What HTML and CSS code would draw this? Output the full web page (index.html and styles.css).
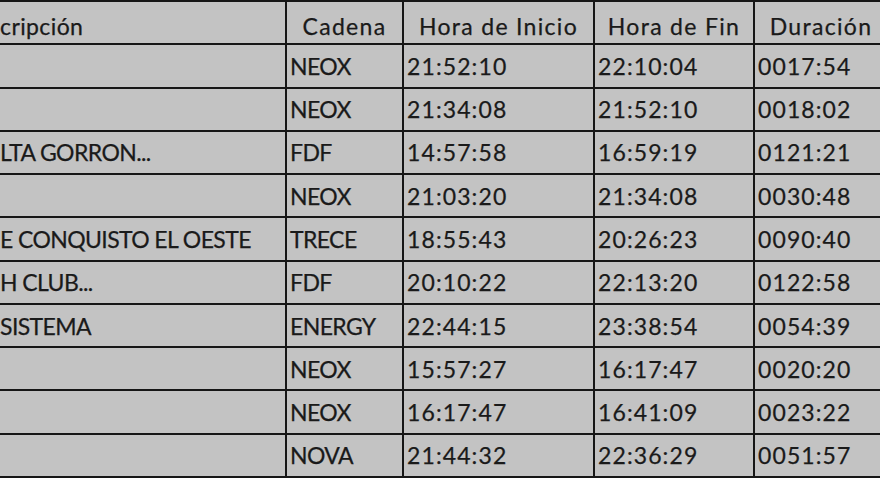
FILE: index.html
```html
<!DOCTYPE html>
<html lang="es">
<head>
<meta charset="utf-8">
<title>Programación</title>
<link rel="stylesheet" href="styles.css">
</head>
<body>
<div class="sheet">
  <div class="cell head desc">cripción</div>
  <div class="cell head">Cadena</div>
  <div class="cell head">Hora de Inicio</div>
  <div class="cell head">Hora de Fin</div>
  <div class="cell head">Duración</div>

  <div class="cell desc cap"></div>
  <div class="cell cap">NEOX</div>
  <div class="cell">21:52:10</div>
  <div class="cell">22:10:04</div>
  <div class="cell">0017:54</div>

  <div class="cell desc cap"></div>
  <div class="cell cap">NEOX</div>
  <div class="cell">21:34:08</div>
  <div class="cell">21:52:10</div>
  <div class="cell">0018:02</div>

  <div class="cell desc cap">LTA GORRON...</div>
  <div class="cell cap">FDF</div>
  <div class="cell">14:57:58</div>
  <div class="cell">16:59:19</div>
  <div class="cell">0121:21</div>

  <div class="cell desc cap"></div>
  <div class="cell cap">NEOX</div>
  <div class="cell">21:03:20</div>
  <div class="cell">21:34:08</div>
  <div class="cell">0030:48</div>

  <div class="cell desc cap">E CONQUISTO EL OESTE</div>
  <div class="cell cap">TRECE</div>
  <div class="cell">18:55:43</div>
  <div class="cell">20:26:23</div>
  <div class="cell">0090:40</div>

  <div class="cell desc cap">H CLUB...</div>
  <div class="cell cap">FDF</div>
  <div class="cell">20:10:22</div>
  <div class="cell">22:13:20</div>
  <div class="cell">0122:58</div>

  <div class="cell desc cap">SISTEMA</div>
  <div class="cell cap">ENERGY</div>
  <div class="cell">22:44:15</div>
  <div class="cell">23:38:54</div>
  <div class="cell">0054:39</div>

  <div class="cell desc cap"></div>
  <div class="cell cap">NEOX</div>
  <div class="cell">15:57:27</div>
  <div class="cell">16:17:47</div>
  <div class="cell">0020:20</div>

  <div class="cell desc cap"></div>
  <div class="cell cap">NEOX</div>
  <div class="cell">16:17:47</div>
  <div class="cell">16:41:09</div>
  <div class="cell">0023:22</div>

  <div class="cell desc cap"></div>
  <div class="cell cap">NOVA</div>
  <div class="cell">21:44:32</div>
  <div class="cell">22:36:29</div>
  <div class="cell">0051:57</div>
</div>
</body>
</html>
```
FILE: styles.css
```css
html, body {
  margin: 0;
  padding: 0;
  background: #ffffff;
  overflow: hidden;
}

body {
  width: 880px;
  height: 495px;
  font-family: Lato, "Open Sans", "Liberation Sans", sans-serif;
  color: #1a1a1a;
}

.sheet {
  display: grid;
  grid-template-columns: 285px 115px 189px 158px 132px;
  grid-template-rows: repeat(11, 1fr);
  column-gap: 2px;
  row-gap: 2px;
  padding: 2px 0;
  height: 478px;
  width: 887px;
  box-sizing: border-box;
  background: #161616;
}

.cell {
  background: #c3c3c3;
  display: flex;
  align-items: center;
  padding-left: 3px;
  font-size: 23px;
  letter-spacing: 1.1px;
  white-space: nowrap;
  overflow: hidden;
  -webkit-text-stroke: 0.25px #1a1a1a;
}

.cell.cap {
  letter-spacing: -0.6px;
}

.cell.desc {
  padding-left: 0;
}

.head {
  justify-content: center;
  align-items: flex-end;
  padding: 0 0 3px 0;
  letter-spacing: 1.3px;
}

.head.desc {
  justify-content: flex-start;
  letter-spacing: 0.4px;
}
```
